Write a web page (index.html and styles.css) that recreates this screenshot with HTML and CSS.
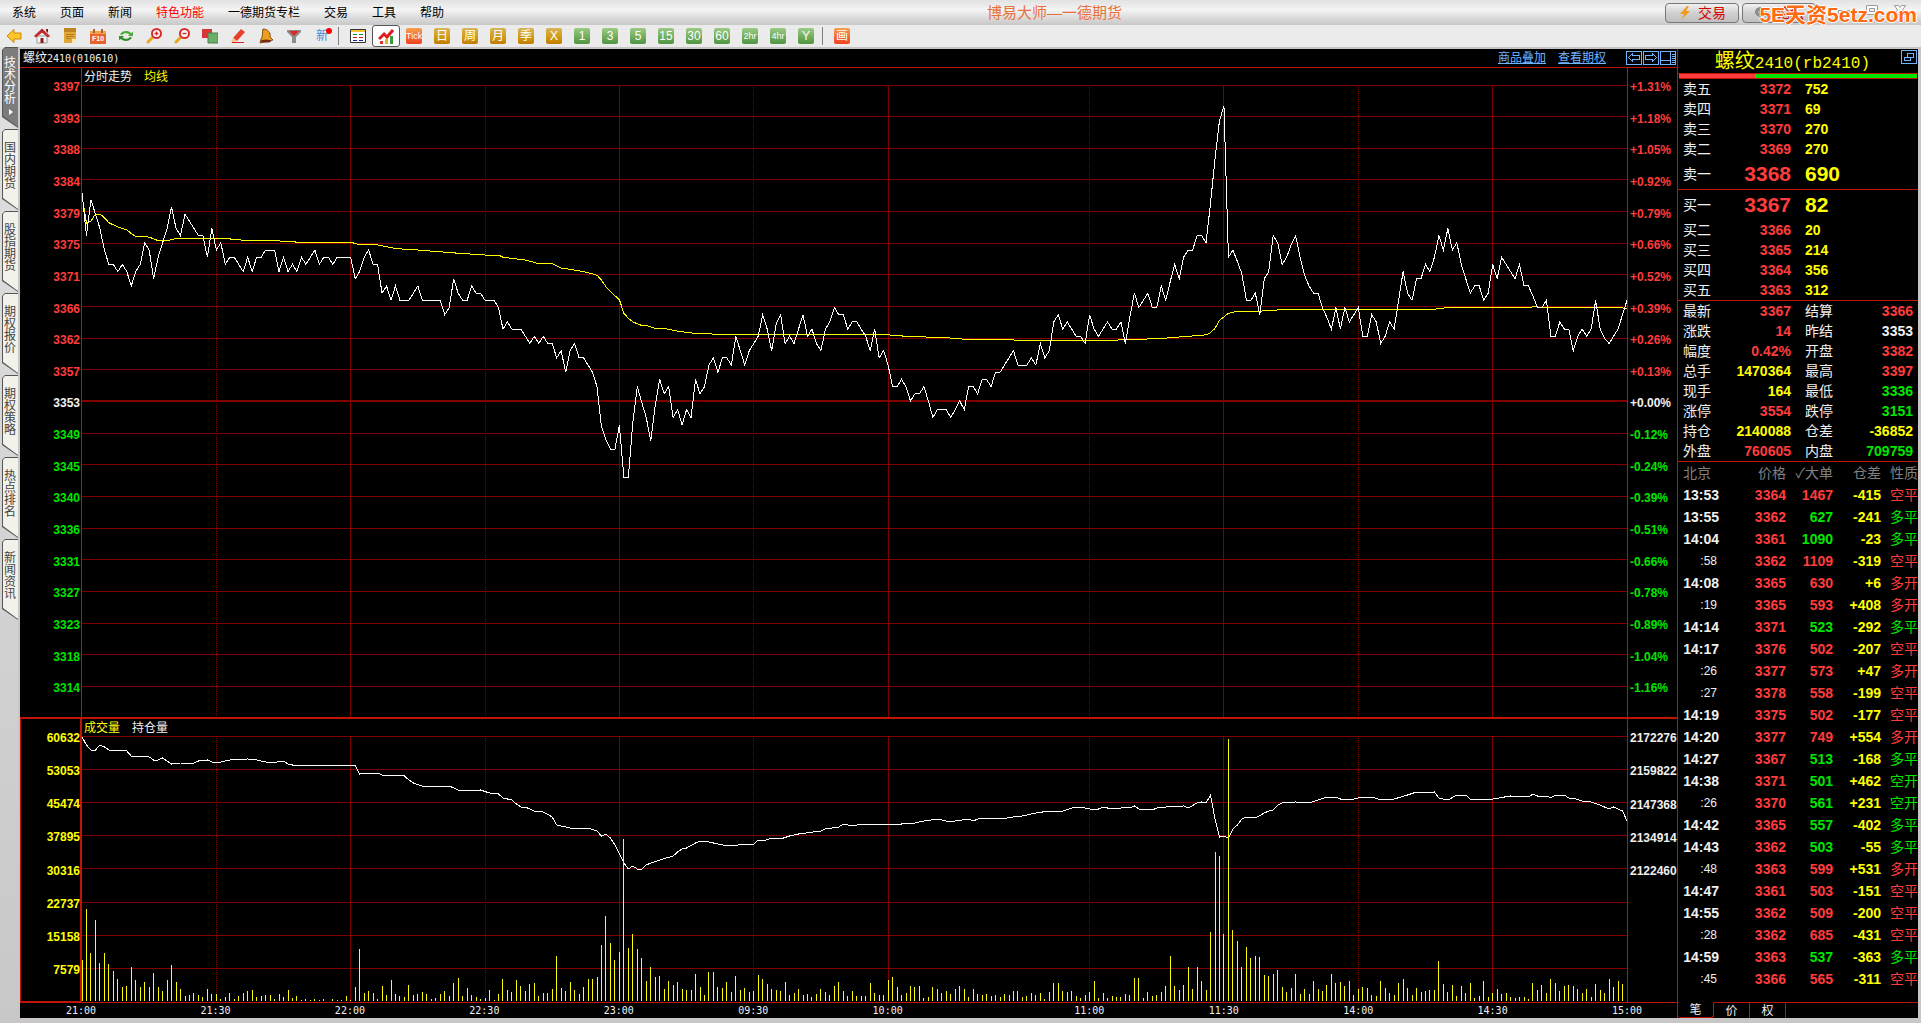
FILE: index.html
```html
<!DOCTYPE html>
<html lang="zh-CN">
<head>
    <meta charset="UTF-8">
    <meta name="viewport" content="width=device-width, initial-scale=1.0">
    <title>博易大师—一德期货</title>
    <link rel="stylesheet" href="styles.css">
</head>
<body>
    <header class="titlebar">
        <nav class="menu">
            <a href="#">系统</a>
            <a href="#">页面</a>
            <a href="#">新闻</a>
            <a href="#" class="hot">特色功能</a>
            <a href="#">一德期货专栏</a>
            <a href="#">交易</a>
            <a href="#">工具</a>
            <a href="#">帮助</a>
        </nav>
        <div class="app-title">博易大师—一德期货</div>
        <div class="title-actions">
            <button class="pill">
                <svg width="14" height="16" viewBox="0 0 14 16"><path d="M9 1 2 9h4l-3 6 9-9H8l3-5z" fill="#f39a1e"/></svg>
                交易
            </button>
            <button class="pill">
                <svg width="16" height="14" viewBox="0 0 16 14"><ellipse cx="7" cy="6" rx="6" ry="5" fill="#8a8a8a"/><path d="m9 9 5 4-2-6z" fill="#8a8a8a"/><path d="M4 6h1M7 6h1M10 6h1" stroke="#fff"/></svg>
                论坛
            </button>
            <div class="window-buttons">
                <button aria-label="最小化"><svg width="14" height="14" viewBox="0 0 14 14"><path d="M1.500 7.500h11v3h-11z" class="win"/></svg></button>
                <button aria-label="最大化"><svg width="14" height="14" viewBox="0 0 14 14"><path d="M1.500 2.500h11v9h-11zM4.500 5.500h5v3h-5z" class="win" fill-rule="evenodd"/></svg></button>
                <button aria-label="关闭"><svg width="14" height="14" viewBox="0 0 14 14"><path d="M1.500 2.500h4l1.500 2 1.500-2h4L9.500 7l3 4.500h-4L7 9.500l-1.500 2h-4L4.500 7z" class="win"/></svg></button>
            </div>
        </div>
        <div class="watermark">5E天资5etz.com</div>
    </header>

    <div class="toolbar">
        <button aria-label="后退"><svg viewBox="0 0 16 16"><path d="M1 8l7-6.500V5h7v6H8v3.500z" fill="#ffc72c" stroke="#c98a00"/></svg></button>
        <button aria-label="首页"><svg viewBox="0 0 16 16"><path d="M3 8h10v7H3z" fill="#f4f4f4" stroke="#999"/><path d="M0.500 8 8 1l7.500 7-1.500 1-6-5-6 5z" fill="#c1272d" stroke="#c1272d"/><path d="M12 1h2v4l-2-2z" fill="#8b1a1a"/><path d="M6.500 10h3v5h-3z" fill="#8b1a1a"/></svg></button>
        <button aria-label="便签"><svg viewBox="0 0 16 16"><path d="M2 1h12v10l-4 4H2z" fill="#e0a838"/><path d="M2 0h12v4H2z" fill="#c08420"/><path d="M14 11h-4v4z" fill="#fff0b0"/><path d="M4 6.500h8M4 8.500h8M4 10.500h5" stroke="#b87d18"/></svg></button>
        <button aria-label="F10"><svg viewBox="0 0 16 16"><path d="M0 3h16v13H0z" fill="#e8632a"/><path d="M0 3h16v3H0z" fill="#f5a34a"/><path d="M4 1v4M12 1v4" stroke="#a8642a" stroke-width="2"/><text x="8" y="13" class="f10">F10</text></svg></button>
        <button aria-label="刷新"><svg viewBox="0 0 16 16"><path d="M2 6.500C4 2.500 10 2 13 5l2-1v4h-5l1.500-1.500C9 4.500 5.500 5 4 7z" fill="#4cae3a"/><path d="M14 9.500C12 13.500 6 14 3 11l-2 1V8h5L4.500 9.500c2.500 2 6 1.500 7.500-.500z" fill="#2f8f2a"/></svg></button>
        <button aria-label="放大"><svg viewBox="0 0 16 16"><path d="m2 14 5-5" stroke="#e8a81e" stroke-width="3" stroke-linecap="round"/><circle cx="10.500" cy="5.500" r="4.500" fill="#fff" stroke="#d92b2b" stroke-width="2"/><path d="M8.500 5.500h4M10.500 3.500v4" stroke="#d92b2b" stroke-width="1.500"/></svg></button>
        <button aria-label="缩小"><svg viewBox="0 0 16 16"><path d="m2 14 5-5" stroke="#e8a81e" stroke-width="3" stroke-linecap="round"/><circle cx="10.500" cy="5.500" r="4.500" fill="#fff" stroke="#d92b2b" stroke-width="2"/><path d="M8.500 5.500h4" stroke="#d92b2b" stroke-width="1.500"/></svg></button>
        <button aria-label="叠加"><svg viewBox="0 0 16 16"><path d="M0 1h10v9H0z" fill="#d9363c"/><path d="M6 5h10v10H6z" fill="#6fae68" stroke="#4c7f48"/></svg></button>
        <button aria-label="画线"><svg viewBox="0 0 16 16"><path d="m3 10 8-9 4 3-8 9z" fill="#e6402a"/><path d="m3 10 4 3-6 2z" fill="#f0c78a"/><path d="M2 14.500h12" stroke="#d22"/></svg></button>
        <button aria-label="预警"><svg viewBox="0 0 16 16"><path d="M5 1c5 0 8 4 7 8l3 3-13 3 1-4c2-2 1-6 2-10z" fill="#e8a01e" stroke="#8a4a10"/><ellipse cx="8" cy="13" rx="5" ry="1.500" fill="#7a2a12"/></svg></button>
        <button aria-label="筛选"><svg viewBox="0 0 16 16"><path d="M1 2h14v2L10 9v6H6V9L1 4z" fill="#8d8d8d"/><path d="M3 3h10L8 8z" fill="#e02828"/></svg></button>
        <button class="new-badge">新</button>
        <span class="sep"></span>
        <button aria-label="报价"><svg viewBox="0 0 16 16"><path d="M.500 1.500h15v13H.500z" fill="#fff" stroke="#333"/><path d="M1 2h14v2H1z" fill="#f3c433"/><path d="M3 6.500h4M9 6.500h4" stroke="#169016"/><path d="M3 9.500h4M9 9.500h4" stroke="#c11"/><path d="M3 12.500h4M9 12.500h4" stroke="#12a"/></svg></button>
        <button class="active" aria-label="分时图"><svg viewBox="0 0 16 16"><path d="m1 11 5-5 3 3 6-7" fill="none" stroke="#e01b1b" stroke-width="3"/><path d="M2 13h3v3H2z" fill="#d33"/><path d="M7 11h3v5H7z" fill="#e4b321"/><path d="M12 8h3v8h-3z" fill="#3c9a3c"/></svg></button>
        <button><span class="tile orange small">Tick</span></button>
        <button><span class="tile gold">日</span></button>
        <button><span class="tile gold">周</span></button>
        <button><span class="tile gold">月</span></button>
        <button><span class="tile gold">季</span></button>
        <button><span class="tile gold">X</span></button>
        <button><span class="tile green">1</span></button>
        <button><span class="tile green">3</span></button>
        <button><span class="tile green">5</span></button>
        <button><span class="tile green">15</span></button>
        <button><span class="tile green">30</span></button>
        <button><span class="tile green">60</span></button>
        <button><span class="tile green small">2hr</span></button>
        <button><span class="tile green small">4hr</span></button>
        <button><span class="tile green">Y</span></button>
        <span class="sep"></span>
        <button><span class="tile orange">画</span></button>
    </div>

    <main class="workspace">
        <nav class="side-tabs">
            <button class="side-tab active"><span>技术分析</span><i></i></button>
            <button class="side-tab"><span>国内期货</span></button>
            <button class="side-tab"><span>股指期货</span></button>
            <button class="side-tab"><span>期权报价</span></button>
            <button class="side-tab"><span>期权策略</span></button>
            <button class="side-tab"><span>热点排名</span></button>
            <button class="side-tab"><span>新闻资讯</span></button>
        </nav>

        <section class="chart">
            <div class="chart-head">
                <span class="chart-name">螺纹<span class="code">2410(010610)</span></span>
                <a href="#">商品叠加</a>
                <a href="#">查看期权</a>
                <div class="chart-tools">
                    <svg width="16" height="14" viewBox="0 0 16 14"><path d="M.500.500h15v13H.500zM2.500 6.500l4-4v2h7v4h-7v2z"/></svg>
                    <svg width="16" height="14" viewBox="0 0 16 14"><path d="M.500.500h15v13H.500zM13.500 6.500l-4-4v2h-7v4h7v2z"/></svg>
                    <svg width="16" height="14" viewBox="0 0 16 14"><path d="M.500.500h15v13H.500zM10.500.500v13M1 9.500h9"/><path d="M12 3.500h3M12 5.500h3M12 7.500h3M12 9.500h3M12 11.500h3"/></svg>
                </div>
            </div>

            <div class="pane price-pane">
                <div class="axis left" id="priceAxis"></div>
                <div class="plot">
                    <svg id="pricePlot" viewBox="0 0 345 649" preserveAspectRatio="none"></svg>
                    <div class="legend"><span>分时走势</span><span class="yellow">均线</span></div>
                </div>
                <div class="axis right" id="percentAxis"></div>
            </div>

            <div class="pane volume-pane">
                <div class="axis left yellow" id="volumeAxis"></div>
                <div class="plot">
                    <svg id="volumePlot" viewBox="0 0 345 283" preserveAspectRatio="none"></svg>
                    <div class="legend"><span class="yellow">成交量</span><span>持仓量</span></div>
                </div>
                <div class="axis right" id="holdAxis"></div>
            </div>

            <div class="time-axis">
                <span>21:00</span><span>21:30</span><span>22:00</span><span>22:30</span>
                <span>23:00</span><span>09:30</span><span>10:00</span><span>11:00</span>
                <span>11:30</span><span>14:00</span><span>14:30</span><span>15:00</span>
            </div>
        </section>

        <aside class="quote">
            <div class="quote-title">
                <h1>螺纹<span>2410(rb2410)</span></h1>
                <svg width="16" height="14" viewBox="0 0 16 14"><path d="M.500.500h15v13H.500zM6.500 3.500h6v4h-6zM3.500 7.500h6v3h-6z"/></svg>
            </div>
            <div class="ratio"><div class="ratio-sell"></div></div>

            <table class="book">
                <tr><th>卖五</th><td class="red">3372</td><td>752</td></tr>
                <tr><th>卖四</th><td class="red">3371</td><td>69</td></tr>
                <tr><th>卖三</th><td class="red">3370</td><td>270</td></tr>
                <tr><th>卖二</th><td class="red">3369</td><td>270</td></tr>
                <tr class="best"><th>卖一</th><td class="red">3368</td><td>690</td></tr>
            </table>
            <table class="book">
                <tr class="best"><th>买一</th><td class="red">3367</td><td>82</td></tr>
                <tr><th>买二</th><td class="red">3366</td><td>20</td></tr>
                <tr><th>买三</th><td class="red">3365</td><td>214</td></tr>
                <tr><th>买四</th><td class="red">3364</td><td>356</td></tr>
                <tr><th>买五</th><td class="red">3363</td><td>312</td></tr>
            </table>
            <table class="summary">
                <tr><th>最新</th><td class="red">3367</td><th>结算</th><td class="red">3366</td></tr>
                <tr><th>涨跌</th><td class="red">14</td><th>昨结</th><td>3353</td></tr>
                <tr><th>幅度</th><td class="red">0.42%</td><th>开盘</th><td class="red">3382</td></tr>
                <tr><th>总手</th><td class="yellow">1470364</td><th>最高</th><td class="red">3397</td></tr>
                <tr><th>现手</th><td class="yellow">164</td><th>最低</th><td class="green">3336</td></tr>
                <tr><th>涨停</th><td class="red">3554</td><th>跌停</th><td class="green">3151</td></tr>
                <tr><th>持仓</th><td class="yellow">2140088</td><th>仓差</th><td class="yellow">-36852</td></tr>
                <tr><th>外盘</th><td class="red">760605</td><th>内盘</th><td class="green">709759</td></tr>
            </table>
            <div class="tick-list">
                <table class="ticks">
                    <thead><tr><th>北京</th><th>价格</th><th>✓大单</th><th>仓差</th><th>性质</th></tr></thead>
                    <tbody id="ticks"></tbody>
                </table>
            </div>
            <div class="quote-tabs">
                <button class="active">笔</button><button>价</button><button>权</button>
            </div>
        </aside>
    </main>

    <script src="chart.js"></script>
</body>
</html>
```
FILE: styles.css
```css
* {
    box-sizing: border-box;
}

body {
    margin: 0;
    height: 100vh;
    display: flex;
    flex-direction: column;
    overflow: hidden;
    background: #c8c6c6;
    color: #f0f0f0;
    font-family: "Liberation Sans", "Noto Sans CJK SC", sans-serif;
    font-size: 12px;
    line-height: 16px;
}

button {
    padding: 0;
    border: 0;
    background: none;
    color: inherit;
    font: inherit;
    cursor: pointer;
}

.red { color: #ff3c3c; }
.green { color: #00e600; }
.yellow { color: #ffff00; }

/* title bar */
.titlebar {
    position: relative;
    display: flex;
    align-items: center;
    flex: none;
    height: 25px;
    background: linear-gradient(#e2e2e2, #f4f4f4 40%, #e0e0e0 65%, #c8c8c8);
}

.menu {
    display: flex;
    gap: 24px;
    padding-left: 12px;
}

.menu a {
    color: #000;
    text-decoration: none;
}

.menu .hot {
    color: #f00;
}

.app-title {
    flex: 1;
    color: #e8703c;
    font-size: 15px;
    text-align: center;
}

.title-actions {
    display: flex;
    gap: 3px;
    padding-right: 6px;
}

.pill {
    display: flex;
    align-items: center;
    justify-content: center;
    gap: 6px;
    width: 74px;
    height: 20px;
    border: 1px solid #777;
    border-radius: 4px;
    background: linear-gradient(#f2f2f2, #d0d0d0 50%, #c0c0c0);
    color: #d80000;
    font-size: 14px;
}

.window-buttons {
    display: flex;
    align-items: center;
    gap: 14px;
    padding: 0 8px 6px 18px;
}

.window-buttons svg,
.pill svg {
    display: block;
}

.win {
    fill: #fff;
    stroke: #999;
}

.watermark {
    position: absolute;
    right: 4px;
    top: 3px;
    color: #ff6a10;
    font-size: 21px;
    font-weight: bold;
    line-height: 24px;
    text-shadow: 1px 0 #fff, -1px 0 #fff, 0 1px #fff, 0 -1px #fff;
}

/* toolbar */
.toolbar {
    display: flex;
    align-items: center;
    flex: none;
    height: 24px;
    background: #ebebeb;
    border-bottom: 2px solid #c8c4c4;
}

.toolbar button {
    display: flex;
    align-items: center;
    justify-content: center;
    width: 28px;
    height: 22px;
}

.toolbar svg {
    width: 16px;
    height: 16px;
}

.toolbar .active {
    border: 1px solid #555;
    border-radius: 3px;
    background: #fff;
}

.toolbar .new-badge {
    color: #3c8ce0;
    position: relative;
}

.new-badge::after {
    content: "";
    position: absolute;
    top: 3px;
    right: 4px;
    width: 6px;
    height: 6px;
    border-radius: 50%;
    background: #f00;
}

.f10 {
    font-size: 7px;
    font-weight: bold;
    fill: #fff;
    text-anchor: middle;
}

.sep {
    width: 8px;
    height: 18px;
    background: linear-gradient(#808080, #808080) 2px 0 / 1px 100% no-repeat;
}

.tile {
    width: 16px;
    height: 16px;
    border-radius: 2px;
    color: #fff;
    font-size: 12px;
    line-height: 16px;
    text-align: center;
}

.tile.small {
    font-size: 9px;
}

.gold { background: linear-gradient(#d8b45a, #d09a10 60%, #c07c00); }
.tile.green { color: #fff; background: linear-gradient(#9ccb84, #4f9440); }
.orange { background: linear-gradient(#f5a050, #f04020); }

/* workspace */
.workspace {
    flex: 1;
    min-height: 0;
    display: flex;
    padding: 0 3px 5px 0;
}

.side-tabs {
    width: 20px;
    flex: none;
    display: flex;
    flex-direction: column;
    gap: 1px;
    padding-left: 2px;
    background: linear-gradient(#e0e0e0, #c8c8c8);
    border-right: 2px solid #cac6c6;
    margin-top: -2px;
}

.side-tab {
    position: relative;
    z-index: 0;
    display: flex;
    flex-direction: column;
    align-items: center;
    width: 16px;
    height: 81px;
    padding-top: 13px;
    background: #555;
    color: #444;
    clip-path: polygon(0 3px, 3px 0, 100% 0, 100% 100%, 0 calc(100% - 11px));
}

.side-tab::before {
    content: "";
    position: absolute;
    z-index: -1;
    inset: 1px 0 1px 1px;
    background: #f2f1ea;
    clip-path: polygon(0 2px, 2px 0, 100% 0, 100% 100%, 0 calc(100% - 11px));
}

.side-tab span {
    width: 12px;
    line-height: 12px;
    word-break: break-all;
}

.side-tab.active {
    padding-top: 10px;
    color: #fff;
}

.side-tab.active::before {
    background: #7c7c7c;
}

.side-tab i {
    margin: 4px 0 0 2px;
    border: 3px solid transparent;
    border-left: 4px solid #fff;
    border-right: 0;
}

/* chart */
.chart {
    flex: 1;
    min-width: 0;
    display: flex;
    flex-direction: column;
    background: #000;
}

.chart-head {
    display: flex;
    align-items: center;
    gap: 12px;
    flex: none;
    height: 19px;
    padding: 0 1px 0 3px;
    border-bottom: 1px solid #c01408;
}

.chart-name {
    flex: 1;
}

.code {
    font: 10px "DejaVu Sans Mono", monospace;
}

.chart-head a {
    color: #6eb4ff;
}

.chart-tools {
    display: flex;
    gap: 1px;
    margin-left: 8px;
}

.chart-tools svg,
.quote-title svg {
    display: block;
    fill: none;
    stroke: #6eb4ff;
    shape-rendering: crispEdges;
}

.pane {
    display: grid;
    grid-template-columns: 62px minmax(0, 1fr) 50px;
    min-height: 0;
}

.price-pane {
    flex: 649 1 0;
}

.volume-pane {
    flex: 283 1 0;
    border-top: 2px solid #c01408;
    border-bottom: 1px solid #c01408;
}

.axis {
    display: grid;
    grid-auto-rows: minmax(0, 1fr);
    padding: 13px 0 3px;
    font-weight: bold;
    line-height: 12px;
}

.axis.left {
    border-right: 1px solid #c01408;
    padding-right: 1px;
    text-align: right;
}

.axis.right {
    border-left: 1px solid #c01408;
    padding-left: 2px;
}

.volume-pane .axis {
    padding-top: 13px;
    padding-bottom: 4px;
}

.volume-pane .axis.left {
    border: 1px solid #c01408;
    border-width: 0 2px 1px 1px;
    padding-right: 0;
}

.plot {
    display: grid;
    min-height: 0;
}

.plot svg {
    grid-area: 1 / 1;
    width: 100%;
    height: 100%;
    min-height: 0;
    overflow: visible;
    shape-rendering: crispEdges;
}

.plot path {
    fill: none;
    vector-effect: non-scaling-stroke;
}

.legend {
    grid-area: 1 / 1;
    z-index: 1;
    align-self: start;
    display: flex;
    gap: 12px;
    padding-left: 2px;
    line-height: 18px;
}

.grid-line { stroke: #800000; }
.grid-zero { stroke: #800000; stroke-width: 2; }
.grid-dot { stroke: #800000; stroke-dasharray: 1 1; }
.line-price { stroke: #fff; }
.line-average { stroke: #ff0; }
.bars { stroke: #ff0; }

.time-axis {
    display: grid;
    grid-template-columns: 30fr 30fr 30fr 30fr 30fr 30fr 45fr 30fr 30fr 30fr 30fr 0;
    height: 15px;
    flex: none;
    padding: 0 50px 0 61px;
    font: 10px/15px "DejaVu Sans Mono", monospace;
}

.time-axis span {
    margin-left: -15px;
}

/* quote panel */
.quote {
    width: 241px;
    flex: none;
    display: flex;
    flex-direction: column;
    background: #000;
    border-left: 1px solid #c01408;
    font-size: 14px;
}

.quote-title {
    display: flex;
    align-items: flex-start;
    justify-content: flex-end;
    gap: 31px;
    flex: none;
    height: 25px;
    padding: 1px 1px 0 0;
    border-bottom: 1px solid #c01408;
}

h1 {
    margin: 0;
    color: #ff0;
    font-size: 20px;
    font-weight: normal;
    line-height: 22px;
}

h1 span {
    font: 16px "Liberation Mono", monospace;
}

.ratio {
    flex: none;
    height: 5px;
    margin: 0 1px;
    border-bottom: 1px solid #c01408;
    background: #00e600;
}

.ratio-sell {
    width: 32%;
    height: 100%;
    background: #ff3c3c;
}

table {
    width: 100%;
    border-collapse: separate;
    border-spacing: 0;
    table-layout: fixed;
}

th {
    padding: 0;
    font-weight: normal;
    text-align: left;
}

td {
    padding: 0;
    font-weight: bold;
    text-align: right;
}

.book,
.summary {
    border-bottom: 1px solid #c01408;
}

.book tr,
.summary tr {
    height: 20px;
}

.book th,
.summary th:first-child {
    width: 44px;
    padding-left: 5px;
}

.book td:nth-child(2),
.summary td:nth-child(2) {
    width: 69px;
}

.book td:last-child {
    padding-left: 14px;
    color: #ff0;
    text-align: left;
}

.book .best {
    height: 30px;
}

.best td {
    font-size: 21px;
}

.summary th:nth-child(3) {
    width: 54px;
    padding-left: 14px;
}

.summary td:last-child {
    padding-right: 5px;
}

.tick-list {
    flex: 1;
    min-height: 0;
    overflow: hidden;
}

.ticks tr {
    height: 22px;
}

.ticks th {
    color: #808080;
    text-align: right;
}

.ticks th:first-child {
    width: 41px;
    padding-left: 5px;
    text-align: left;
    white-space: nowrap;
}

.ticks th:nth-child(2) { width: 67px; }
.ticks th:nth-child(3) { width: 47px; }
.ticks th:nth-child(4) { width: 48px; }

.ticks td:last-child {
    font-weight: normal;
}

.ticks .second {
    padding-right: 2px;
    font-size: 12px;
    font-weight: normal;
}

.quote-tabs {
    display: flex;
    height: 16px;
    flex: none;
}

.quote-tabs::after {
    content: "";
    flex: 1;
    border-top: 1px solid #c01408;
}

.quote-tabs button {
    width: 36px;
    border-top: 1px solid #c01408;
    border-right: 1px solid #c01408;
    font-size: 12px;
    line-height: 14px;
}

.quote-tabs .active {
    border-top-color: transparent;
    border-bottom: 1px solid #c01408;
    border-radius: 0 0 3px 3px;
}
```
FILE: chart.js
```js
const SVG_NS = 'http://www.w3.org/2000/svg';

// one value per trading minute, 21:00 - 15:00
const prices = [
    3382, 3376, 3381, 3379, 3377, 3374, 3372, 3372, 3371, 3372, 3371, 3369, 3371, 3372, 3375, 3374, 3370, 3373, 3375, 3377,
    3380, 3377, 3376, 3379, 3378, 3377, 3376, 3376, 3373, 3377, 3374, 3375, 3372, 3373, 3373, 3372, 3371, 3373, 3371, 3373,
    3373, 3374, 3374, 3374, 3371, 3373, 3371, 3372, 3371, 3373, 3372, 3373, 3374, 3372, 3373, 3373, 3372, 3373, 3373, 3373,
    3373, 3370, 3371, 3373, 3374, 3372, 3372, 3368, 3369, 3367, 3369, 3367, 3367, 3367, 3368, 3369, 3367, 3367, 3367, 3367,
    3367, 3365, 3366, 3370, 3368, 3367, 3367, 3369, 3368, 3368, 3367, 3367, 3367, 3366, 3363, 3364, 3363, 3363, 3363, 3362,
    3361, 3362, 3361, 3362, 3361, 3361, 3359, 3360, 3357, 3360, 3361, 3359, 3359, 3358, 3357, 3355, 3349.4, 3347.6, 3346.3, 3346.3,
    3349.6, 3342.4, 3342.4, 3350, 3355, 3352.8, 3350.7, 3347.4, 3352.4, 3356, 3354, 3355, 3350.7, 3351.8, 3349.7, 3351.8, 3350.7, 3356, 3354, 3355,
    3358, 3359, 3357, 3359, 3359, 3358, 3362, 3360, 3358, 3360, 3361, 3362, 3365, 3363, 3360, 3363.7, 3365, 3361, 3362, 3361,
    3363, 3365, 3362, 3363, 3361, 3360, 3363, 3364, 3366, 3365, 3365, 3363, 3364, 3364, 3363, 3362, 3360, 3363, 3359, 3360,
    3358, 3355, 3355, 3356, 3355, 3353, 3354, 3354, 3355, 3353, 3350.7, 3351.8, 3351.8, 3351.8, 3350.7, 3351.8, 3353, 3351.8, 3355, 3355,
    3354, 3356, 3356, 3355, 3357, 3357, 3358, 3359, 3360, 3358, 3358, 3358, 3359, 3358, 3361, 3359, 3360, 3364, 3365, 3363,
    3364, 3363, 3362, 3362, 3361, 3365, 3363, 3362, 3363, 3364, 3363, 3363, 3364, 3361, 3364.7, 3368, 3366, 3367, 3368, 3366,
    3366, 3369, 3367, 3369.6, 3372, 3370, 3373, 3374, 3374, 3376, 3376, 3375, 3380.5, 3386.7, 3392, 3394, 3373, 3374, 3372.4, 3370.7,
    3367, 3367, 3368, 3365, 3370, 3371, 3376, 3375, 3372, 3373, 3374.7, 3376, 3373, 3370.5, 3369, 3368, 3368, 3366, 3364.6, 3363,
    3366, 3363, 3366, 3364, 3365, 3366, 3362, 3362, 3365, 3364, 3361, 3362, 3364, 3363, 3367, 3371, 3368, 3367, 3370, 3370,
    3372, 3371, 3373, 3376, 3374, 3377, 3374, 3375, 3372, 3370, 3368, 3369, 3369, 3367, 3368, 3372, 3370, 3373, 3372, 3371,
    3370, 3372, 3369, 3369, 3367.6, 3366, 3366, 3367, 3362, 3362, 3364, 3363, 3363, 3360, 3362, 3363, 3362, 3363, 3367, 3363,
    3361.7, 3361, 3362, 3363, 3365, 3367
];

// [minute, average price]
const average = [
    [0, 3381.6], [1, 3377.7], [2, 3378], [3, 3379], [4, 3379], [5, 3378.5], [6, 3377.8], [8, 3377.2], [10, 3376.8], [11, 3376.3],
    [12, 3375.9], [15, 3375.8], [17, 3375.3], [19, 3375.3], [21, 3375.6], [32, 3375.6], [37, 3375.3], [43, 3375.3], [48, 3375.1],
    [60, 3375.1], [62, 3374.7], [66, 3374.7], [70, 3374.2], [75, 3374], [83, 3373.6], [90, 3373.3], [93, 3373.3], [94, 3373],
    [99, 3372.6], [102, 3372.1], [105, 3372.1], [107, 3371.5], [112, 3371], [115, 3370.5], [116, 3369.8], [117, 3368.9],
    [118, 3368.2], [120, 3367.1], [121, 3365.2], [122, 3364.5], [123, 3364], [125, 3363.5], [126, 3363.5], [128, 3363.1],
    [131, 3363], [133, 3362.7], [137, 3362.4], [146, 3362.2], [168, 3362.2], [169, 3362.3], [178, 3362.3], [184, 3362],
    [193, 3361.8], [197, 3361.6], [205, 3361.5], [224, 3361.4], [233, 3361.5], [241, 3361.7], [243, 3361.8], [247, 3362],
    [251, 3362.2], [252, 3362.5], [253, 3363.1], [254, 3364.2], [255, 3364.7], [256, 3365.2], [258, 3365.5], [263, 3365.5],
    [268, 3365.7], [301, 3365.7], [305, 3366], [323, 3366], [324, 3366.1], [328, 3366], [342, 3366], [345, 3365.9]
];

// [minute, height in the lower pane]
const holding = [
    [0, 18], [1, 26], [2, 31], [3, 31], [4, 26], [5, 28], [6, 31], [10, 32], [11, 37], [15, 38], [16, 41], [17, 41], [18, 39],
    [20, 45], [22, 44], [25, 44], [26, 42], [28, 41], [29, 43], [31, 43], [33, 41], [37, 40], [39, 41], [41, 43], [43, 44],
    [44, 42], [45, 42], [46, 45], [48, 47], [49, 46], [61, 46], [62, 55], [63, 54], [66, 54], [67, 56], [72, 57], [73, 61],
    [74, 64], [76, 67], [82, 67], [83, 69], [84, 71], [87, 72], [89, 71], [91, 74], [93, 75], [94, 79], [96, 81], [97, 85],
    [98, 88], [99, 88], [101, 92], [103, 93], [105, 98], [106, 106], [109, 109], [111, 110], [113, 109], [115, 112], [116, 117],
    [117, 115], [118, 119], [119, 126], [120, 135], [121, 144], [122, 150], [123, 147], [124, 150], [125, 150], [126, 146],
    [127, 144], [129, 141], [132, 137], [133, 133], [134, 130], [135, 129], [137, 124], [138, 122], [139, 122], [142, 125],
    [143, 126], [146, 127], [147, 125], [150, 125], [151, 121], [152, 122], [154, 119], [156, 120], [158, 117], [160, 115],
    [165, 112], [166, 110], [169, 108], [170, 105], [172, 107], [174, 105], [183, 105], [186, 104], [188, 102], [191, 100],
    [193, 102], [195, 102], [198, 100], [199, 102], [200, 100], [203, 99], [205, 100], [208, 98], [210, 97], [213, 94],
    [216, 92], [217, 93], [219, 92], [221, 89], [223, 88], [225, 90], [227, 90], [228, 88], [229, 89], [232, 89], [233, 88],
    [234, 89], [235, 87], [236, 90], [239, 91], [240, 89], [242, 88], [246, 87], [247, 89], [249, 84], [250, 83], [251, 84],
    [252, 76], [253, 100], [254, 118], [255, 117], [256, 119], [257, 110], [258, 106], [259, 100], [260, 98], [262, 99],
    [264, 94], [265, 92], [266, 91], [267, 86], [268, 84], [271, 83], [274, 84], [276, 81], [278, 78], [279, 79], [280, 78],
    [281, 80], [284, 80], [285, 79], [288, 78], [290, 81], [293, 80], [296, 76], [298, 73], [300, 73], [301, 74], [302, 73],
    [303, 79], [305, 81], [307, 76], [309, 76], [310, 80], [313, 81], [315, 80], [319, 77], [323, 78], [324, 75], [325, 77],
    [327, 77], [328, 79], [329, 76], [331, 76], [332, 79], [333, 79], [335, 82], [337, 83], [339, 86], [341, 90], [342, 88],
    [343, 90], [344, 92], [345, 102]
];

const volumes = [
    41, 92, 48, 81, 38, 48, 37, 30, 22, 14, 15, 34, 21, 14, 19, 14, 28, 14, 10, 21, 36, 19, 12, 5, 6, 8, 6, 4, 12, 7,
    7, 2, 4, 8, 2, 5, 8, 10, 11, 4, 5, 6, 6, 2, 7, 4, 11, 3, 5, 1, 2, 1, 2, 1, 2, 0, 2, 1, 1, 5,
    1, 14, 52, 8, 10, 8, 2, 15, 6, 21, 7, 5, 4, 16, 6, 7, 9, 7, 2, 3, 7, 10, 5, 18, 23, 5, 13, 6, 4, 2,
    3, 11, 1, 7, 22, 11, 9, 21, 15, 10, 17, 18, 5, 8, 8, 12, 45, 13, 10, 19, 11, 7, 14, 22, 22, 24, 56, 85, 58, 41,
    49, 162, 53, 67, 52, 43, 20, 34, 24, 25, 12, 20, 16, 19, 12, 11, 11, 27, 14, 6, 29, 29, 14, 13, 19, 9, 25, 11, 13, 9,
    10, 26, 22, 17, 12, 11, 10, 19, 6, 8, 12, 6, 7, 4, 7, 12, 9, 6, 15, 19, 10, 5, 10, 5, 5, 5, 18, 8, 6, 6,
    21, 24, 14, 6, 8, 15, 14, 15, 3, 4, 14, 12, 8, 10, 7, 12, 15, 12, 4, 12, 7, 6, 7, 5, 6, 4, 7, 6, 10, 10,
    4, 5, 8, 6, 8, 2, 9, 18, 18, 10, 9, 10, 5, 3, 6, 9, 20, 3, 8, 3, 5, 4, 4, 7, 6, 23, 23, 3, 9, 5,
    6, 9, 15, 45, 15, 11, 16, 34, 12, 34, 20, 11, 69, 149, 145, 67, 262, 71, 60, 34, 54, 43, 45, 44, 26, 25, 27, 31, 14, 9,
    13, 27, 7, 12, 7, 20, 12, 10, 16, 27, 18, 19, 15, 20, 6, 12, 14, 13, 6, 5, 20, 13, 8, 6, 18, 22, 13, 6, 13, 9,
    10, 11, 11, 40, 17, 9, 16, 5, 15, 8, 18, 3, 5, 20, 4, 8, 12, 7, 8, 4, 3, 4, 4, 2, 18, 11, 16, 8, 22, 18,
    10, 15, 16, 15, 12, 8, 12, 4, 17, 11, 8, 22, 14, 20, 17, 37
];

const priceLabels = [3397, 3393, 3388, 3384, 3379, 3375, 3371, 3366, 3362, 3357, 3353, 3349, 3345, 3340, 3336, 3331, 3327, 3323, 3318, 3314];
const percentLabels = ['+1.31%', '+1.18%', '+1.05%', '+0.92%', '+0.79%', '+0.66%', '+0.52%', '+0.39%', '+0.26%', '+0.13%', '+0.00%',
    '-0.12%', '-0.24%', '-0.39%', '-0.51%', '-0.66%', '-0.78%', '-0.89%', '-1.04%', '-1.16%'];
const volumeLabels = [60632, 53053, 45474, 37895, 30316, 22737, 15158, 7579];
const holdLabels = [2172276, 2159822, 2147368, 2134914, 2122460, '', '', ''];

// time, price, size, size colour, position change, kind, kind colour
const ticks = [
    ['13:53', 3364, 1467, 'red', '-415', '空平', 'red'],
    ['13:55', 3362, 627, 'green', '-241', '多平', 'green'],
    ['14:04', 3361, 1090, 'green', '-23', '多平', 'green'],
    [':58', 3362, 1109, 'red', '-319', '空平', 'red'],
    ['14:08', 3365, 630, 'red', '+6', '多开', 'red'],
    [':19', 3365, 593, 'red', '+408', '多开', 'red'],
    ['14:14', 3371, 523, 'green', '-292', '多平', 'green'],
    ['14:17', 3376, 502, 'red', '-207', '空平', 'red'],
    [':26', 3377, 573, 'red', '+47', '多开', 'red'],
    [':27', 3378, 558, 'red', '-199', '空平', 'red'],
    ['14:19', 3375, 502, 'red', '-177', '空平', 'red'],
    ['14:20', 3377, 749, 'red', '+554', '多开', 'red'],
    ['14:27', 3367, 513, 'green', '-168', '多平', 'green'],
    ['14:38', 3371, 501, 'green', '+462', '空开', 'green'],
    [':26', 3370, 561, 'green', '+231', '空开', 'green'],
    ['14:42', 3365, 557, 'green', '-402', '多平', 'green'],
    ['14:43', 3362, 503, 'green', '-55', '多平', 'green'],
    [':48', 3363, 599, 'red', '+531', '多开', 'red'],
    ['14:47', 3361, 503, 'red', '-151', '空平', 'red'],
    ['14:55', 3362, 509, 'red', '-200', '空平', 'red'],
    [':28', 3362, 685, 'red', '-431', '空平', 'red'],
    ['14:59', 3363, 537, 'green', '-363', '多平', 'green'],
    [':45', 3366, 565, 'red', '-311', '空平', 'red']
];

function addPath(svg, className, d) {
    const path = document.createElementNS(SVG_NS, 'path');
    path.setAttribute('class', className);
    path.setAttribute('d', d);
    svg.appendChild(path);
}

function toPath(points) {
    return 'M' + points.map(p => p.join(' ')).join('L');
}

function drawGrid(svg, top, step, count, height) {
    for (let i = 0; i < count; i++) {
        const y = Math.floor(top + i * step) + 0.5;
        addPath(svg, 'grid-line', `M0 ${y}H345`);
    }
    [30, 90, 150, 225, 285].forEach(m => addPath(svg, 'grid-dot', `M${m} ${top}V${height}`));
    [60, 120, 180, 255, 315].forEach(m => addPath(svg, 'grid-line', `M${m} ${top}V${height}`));
}

function fillAxis(id, labels, colorOf) {
    const axis = document.getElementById(id);
    labels.forEach((label, i) => {
        const row = document.createElement('div');
        row.textContent = label;
        if (colorOf) row.className = colorOf(i);
        axis.appendChild(row);
    });
}

function priceY(price) {
    return 333 + (3353 - price) * 7.19;
}

const pricePlot = document.getElementById('pricePlot');
drawGrid(pricePlot, 17, 31.65, 20, 649);
addPath(pricePlot, 'grid-zero', 'M0 333H345');
addPath(pricePlot, 'line-average', toPath(average.map(([m, p]) => [m, priceY(p)])));
addPath(pricePlot, 'line-price', toPath(prices.map((p, m) => [m, priceY(p)])));

const volumePlot = document.getElementById('volumePlot');
drawGrid(volumePlot, 17, 33.2, 8, 283);
addPath(volumePlot, 'line-price', toPath(holding));
addPath(volumePlot, 'bars', volumes.map((v, m) => v ? `M${m} 282v${-v}` : '').join(''));

const sideColor = i => i < 10 ? 'red' : i > 10 ? 'green' : '';
fillAxis('priceAxis', priceLabels, sideColor);
fillAxis('percentAxis', percentLabels, sideColor);
fillAxis('volumeAxis', volumeLabels);
fillAxis('holdAxis', holdLabels);

document.getElementById('ticks').innerHTML = ticks.map(([time, price, size, sizeColor, change, kind, kindColor]) => `
    <tr>
        <td class="${time[0] === ':' ? 'second' : ''}">${time}</td>
        <td class="red">${price}</td>
        <td class="${sizeColor}">${size}</td>
        <td class="yellow">${change}</td>
        <td class="${kindColor}">${kind}</td>
    </tr>`).join('');
```
